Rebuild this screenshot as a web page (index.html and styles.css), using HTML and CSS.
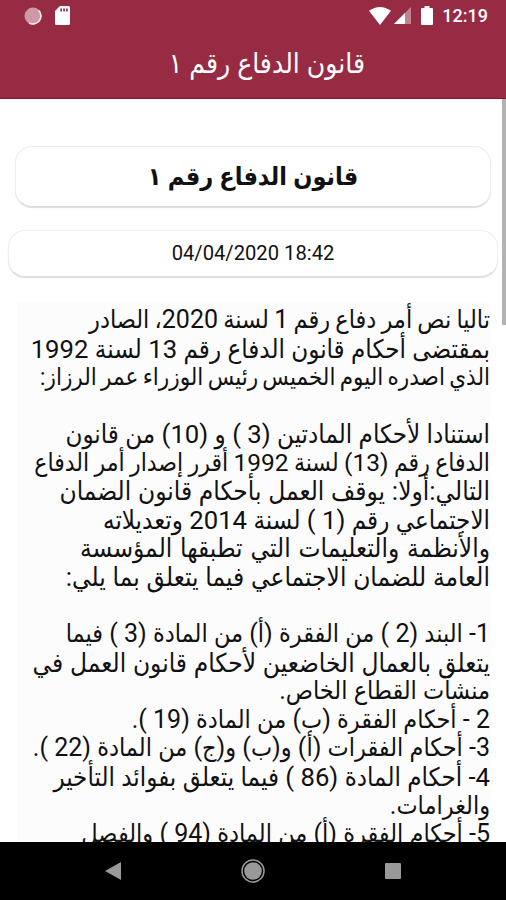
FILE: index.html
```html
<!DOCTYPE html>
<html lang="ar">
<head>
  <meta charset="UTF-8">
  <meta name="viewport" content="width=device-width, initial-scale=1.0">
  <title>قانون الدفاع رقم ١</title>
  <link rel="stylesheet" href="styles.css">
</head>
<body>
  <header class="header">
    <div class="status-bar">
      <div class="status-left">
        <svg width="18" height="18" viewBox="0 0 18 18">
          <circle cx="9" cy="9" r="8.5" fill="#cf98a6"/>
          <path d="M14.6 3.4A8 8 0 0 1 5 16" fill="none" stroke="#f6e9ec" stroke-width="1.5"/>
        </svg>
        <svg width="15" height="19" viewBox="0 0 15 19">
          <path d="M5 0h8.500a1.500 1.500 0 0 1 1.500 1.500v16a1.500 1.500 0 0 1-1.500 1.500h-12A1.500 1.500 0 0 1 0 17.500V5z" fill="#fff"/>
          <path d="M5.300 2.500h1.700v3h-1.700zM8.200 2.500h1.700v3h-1.700zM11.100 2.500h1.700v3h-1.700z" fill="#982b44"/>
        </svg>
      </div>
      <div class="status-right">
        <svg width="22" height="18" viewBox="0 0 22 18">
          <path d="M0 3.800Q11-3.800 22 3.800L11 18z" fill="#fff"/>
        </svg>
        <svg class="signal" width="17" height="17" viewBox="0 0 17 17">
          <path d="M17 0v17H0z" fill="#c28391"/>
          <path d="M11 6v11H0z" fill="#fff"/>
        </svg>
        <svg class="battery" width="12" height="19" viewBox="0 0 12 19">
          <path d="M3.500 0h5v2H11a1 1 0 0 1 1 1v15a1 1 0 0 1-1 1H1a1 1 0 0 1-1-1V3a1 1 0 0 1 1-1h2.500z" fill="#fff"/>
        </svg>
        <span class="clock">12:19</span>
      </div>
    </div>
    <h1 class="header-title" dir="rtl">قانون الدفاع رقم ١</h1>
  </header>

  <main class="content" dir="rtl">
    <div class="scrollbar"></div>
    <h2 class="card card-title">قانون الدفاع رقم ١</h2>
    <div class="card card-date" dir="ltr">04/04/2020 18:42</div>

    <article class="article">
      <p>
        <span class="line snug">تاليا نص أمر دفاع رقم 1 لسنة 2020، الصادر</span>
        <span class="line wide">بمقتضى أحكام قانون الدفاع رقم 13 لسنة 1992</span>
        <span class="line narrow">الذي اصدره اليوم الخميس رئيس الوزراء عمر الرزاز:</span>
      </p>
      <p>
        <span class="line wide">استنادا لأحكام المادتين (3 ) و (10) من قانون</span>
        <span class="line tight">الدفاع رقم (13) لسنة 1992 أقرر إصدار أمر الدفاع</span>
        <span class="line wider">التالي:أولا: يوقف العمل بأحكام قانون الضمان</span>
        <span class="line wide">الاجتماعي رقم (1 ) لسنة 2014 وتعديلاته</span>
        <span class="line widest">والأنظمة والتعليمات التي تطبقها المؤسسة</span>
        <span class="line wider">العامة للضمان الاجتماعي فيما يتعلق بما يلي:</span>
      </p>
      <p>
        <span class="line">1- البند (2 ) من الفقرة (أ) من المادة (3 ) فيما</span>
        <span class="line wider">يتعلق بالعمال الخاضعين لأحكام قانون العمل في</span>
        <span class="line">منشآت القطاع الخاص.</span>
        <span class="line">2 - أحكام الفقرة (ب) من المادة (19 ).</span>
        <span class="line">3- أحكام الفقرات (أ) و(ب) و(ج) من المادة (22 ).</span>
        <span class="line wide">4- أحكام المادة (86 ) فيما يتعلق بفوائد التأخير</span>
        <span class="line">والغرامات.</span>
        <span class="line">5- أحكام الفقرة (أ) من المادة (94 ) والفصل</span>
      </p>
    </article>
  </main>

  <nav class="nav-bar">
    <svg width="16" height="18" viewBox="0 0 16 18"><path d="M16 0v18L0 9z" fill="#999"/></svg>
    <svg width="24" height="24" viewBox="0 0 24 24">
      <circle cx="12" cy="12" r="11" fill="none" stroke="#999" stroke-width="1.500"/>
      <circle cx="12" cy="12" r="8.800" fill="#999"/>
    </svg>
    <svg width="16" height="16" viewBox="0 0 16 16"><rect width="16" height="16" rx="1" fill="#999"/></svg>
  </nav>
</body>
</html>
```
FILE: styles.css
```css
* {
  box-sizing: border-box;
}

body {
  margin: 0;
  height: 900px;
  display: flex;
  flex-direction: column;
  overflow: hidden;
  background: #fff;
  color: #111;
  font-family: Roboto, "DejaVu Sans Condensed", "DejaVu Sans", sans-serif;
}

svg {
  display: block;
}

.header {
  height: 99px;
  flex: none;
  background: #982b44;
  border-bottom: 1px solid #86122c;
  color: #fff;
}

.status-bar {
  height: 31px;
  padding: 0 18px 0 24px;
  display: flex;
  justify-content: space-between;
  align-items: center;
}

.status-left,
.status-right {
  display: flex;
  align-items: center;
}

.status-left {
  gap: 13px;
}

.signal {
  margin-left: 3px;
}

.battery {
  margin: 0 9px 0 10px;
}

.clock {
  font-size: 18px;
  font-weight: 500;
}

.header-title {
  margin: 0;
  padding-right: 141px;
  font-size: 28px;
  font-weight: 400;
  line-height: 66px;
}

.content {
  position: relative;
  flex: 1;
  min-height: 0;
  padding: 47px 8px 0;
  overflow: hidden;
}

.scrollbar {
  position: absolute;
  top: 0;
  right: 0;
  width: 4px;
  height: 226px;
  background: #b3b3b3;
}

.card {
  margin: 0;
  display: flex;
  align-items: center;
  justify-content: center;
  border: 1px solid #eee;
  border-bottom-color: #ddd;
  border-radius: 17px;
  box-shadow: 0 1px 1px #ddd;
  background: #fff;
}

.card-title {
  height: 61px;
  margin: 0 7px 23px;
  padding-left: 0;
  padding-right: 0;
  font-size: 25px;
  font-weight: 700;
}

.card-date {
  height: 47px;
  padding-bottom: 1px;
  font-size: 20.2px;
}

.article {
  margin: 25px 8px 0 9px;
  padding-top: 4px;
  background: #fcfcfc;
  font-size: 25px;
  line-height: 28.56px;
}

.article p {
  margin: 0 0 28.56px;
}

.line {
  display: block;
  white-space: nowrap;
}

.snug {
  word-spacing: -1px;
}

.tight {
  font-size: 24.5px;
  word-spacing: -0.7px;
}

.narrow {
  font-size: 24px;
  word-spacing: -1.7px;
}

.wide {
  font-size: 25.7px;
}

.wider {
  font-size: 26px;
  word-spacing: 0.3px;
}

.widest {
  font-size: 26px;
  word-spacing: 1.4px;
}

.nav-bar {
  height: 58px;
  flex: none;
  padding: 0 105px;
  display: flex;
  align-items: center;
  justify-content: space-between;
  background: #000;
}
```
